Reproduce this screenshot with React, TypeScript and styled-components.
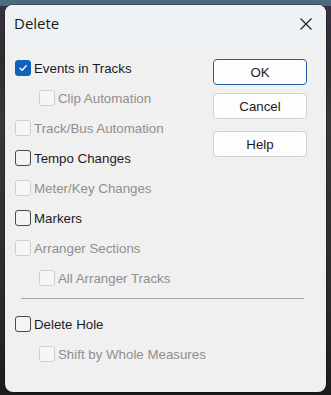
import React from "react";
import styled, { createGlobalStyle } from "styled-components";

const Global = createGlobalStyle`
  html, body { margin: 0; padding: 0; }
  body {
    width: 331px;
    height: 395px;
    overflow: hidden;
    background:
      linear-gradient(to bottom, #4b6a7d 0px, #4b6a7d 6px, transparent 6px),
      linear-gradient(to bottom, #3a3046 0px, #2e2e33 60px, #383838 120px, #2b2b2b 300px, #1c1c1c 395px);
    font-family: "Liberation Sans", Arial, sans-serif;
    font-weight: 400;
  }
`;

const Dialog = styled.div`
  margin: 5px;
  width: 321px;
  height: 387px;
  border-radius: 8px;
  background: #f0f0f0;
  overflow: hidden;
  display: flex;
  flex-direction: column;
  box-shadow: 0 0 0 1px rgba(0, 0, 0, 0.25);
`;

const TitleBar = styled.div`
  height: 40px;
  flex: none;
  display: flex;
  align-items: center;
  justify-content: space-between;
  padding: 0 14px 0 9px;
  background: #eef2f4;
`;

const Title = styled.div`
  font-family: "Open Sans", "Noto Sans", sans-serif;
  font-size: 15px;
  color: #1a1a1a;
  margin-top: -4px;
`;

const Close = styled.svg`
  width: 12px;
  height: 12px;
  margin-top: -3px;
`;

const Content = styled.div`
  padding: 8px 19px 0 10px;
  display: flex;
  flex-direction: column;
`;

const Top = styled.div`
  display: flex;
  justify-content: space-between;
  align-items: flex-start;
`;

const List = styled.div`
  display: flex;
  flex-direction: column;
`;

const Row = styled.div<{ $indent?: boolean }>`
  height: 30px;
  display: flex;
  align-items: center;
  gap: 3px;
  padding-left: ${(p) => (p.$indent ? 24 : 0)}px;
  font-size: 13.3px;
  font-weight: 400;
`;

const Box = styled.span<{ $checked?: boolean; $disabled?: boolean }>`
  width: 16px;
  height: 16px;
  box-sizing: border-box;
  border-radius: 3px;
  display: flex;
  align-items: center;
  justify-content: center;
  border: 1px solid
    ${(p) => (p.$checked ? "#0f62b8" : p.$disabled ? "#cfcfcf" : "#4a4a4a")};
  background: ${(p) => (p.$checked ? "#0f62b8" : p.$disabled ? "#f6f6f6" : "#f4f4f4")};
`;

const Label = styled.span<{ $disabled?: boolean }>`
  color: ${(p) => (p.$disabled ? "#8f8f8f" : "#1c1c1c")};
`;

const Buttons = styled.div`
  display: flex;
  flex-direction: column;
  margin-top: 6px;
`;

const Button = styled.div<{ $default?: boolean; $gap?: number }>`
  width: 94px;
  height: 26px;
  box-sizing: border-box;
  margin-top: ${(p) => p.$gap ?? 0}px;
  border-radius: 4px;
  background: #fdfdfd;
  border: ${(p) => (p.$default ? "1.5px solid #1d5f9c" : "1px solid #d2d2d2")};
  display: flex;
  align-items: center;
  justify-content: center;
  font-size: 13.3px;
  font-weight: 400;
  color: #1c1c1c;
`;

const Separator = styled.div`
  height: 1px;
  background: #a6a6a6;
  margin: 5px 3px 10px 6px;
`;

const Check = () => (
  <svg width="10" height="10" viewBox="0 0 10 10">
    <path d="M2 5.2 L4.2 7.3 L8.2 2.8" fill="none" stroke="#fff" strokeWidth="1.3" strokeLinecap="round" strokeLinejoin="round" />
  </svg>
);

type Item = { label: string; checked?: boolean; disabled?: boolean; indent?: boolean };

const CheckRow = ({ label, checked, disabled, indent }: Item) => (
  <Row $indent={indent}>
    <Box $checked={checked} $disabled={disabled}>{checked && <Check />}</Box>
    <Label $disabled={disabled}>{label}</Label>
  </Row>
);

const items: Item[] = [
  { label: "Events in Tracks", checked: true },
  { label: "Clip Automation", disabled: true, indent: true },
  { label: "Track/Bus Automation", disabled: true },
  { label: "Tempo Changes" },
  { label: "Meter/Key Changes", disabled: true },
  { label: "Markers" },
  { label: "Arranger Sections", disabled: true },
  { label: "All Arranger Tracks", disabled: true, indent: true },
];

export default function App() {
  return (
    <>
      <Global />
      <Dialog>
        <TitleBar>
          <Title>Delete</Title>
          <Close viewBox="0 0 12 12">
            <path d="M0.5 0.5 L11.5 11.5 M11.5 0.5 L0.5 11.5" stroke="#1a1a1a" strokeWidth="1.1" />
          </Close>
        </TitleBar>
        <Content>
          <Top>
            <List>
              {items.map((it) => (
                <CheckRow key={it.label} {...it} />
              ))}
            </List>
            <Buttons>
              <Button $default>OK</Button>
              <Button $gap={8}>Cancel</Button>
              <Button $gap={12}>Help</Button>
            </Buttons>
          </Top>
          <Separator />
          <List>
            <CheckRow label="Delete Hole" />
            <CheckRow label="Shift by Whole Measures" disabled indent />
          </List>
        </Content>
      </Dialog>
    </>
  );
}
